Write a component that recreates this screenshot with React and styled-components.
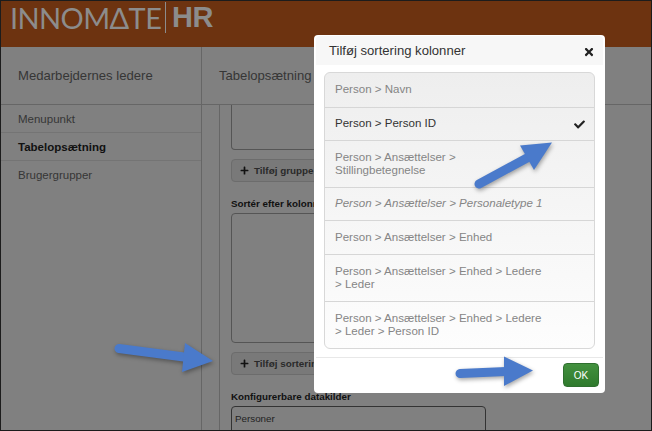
import styled, { createGlobalStyle } from 'styled-components';
import { FaCheck, FaPlus, FaTimes } from 'react-icons/fa';

const GlobalStyle = createGlobalStyle`
  html, body { margin: 0; padding: 0; background: #808080; }
  * { box-sizing: border-box; }
  body { font-family: "Liberation Sans", Arial, sans-serif; }
`;

// the page sits dimmed behind the dialog, so these are the dimmed values
const colors = {
  brand: '#6d3310',
  page: '#808080',
  logo: '#8c8c8c',
  text: '#363636',
  strong: '#111111',
  rule: '#666666',
  softRule: '#747474',
  muted: '#858585',
};

const Page = styled.div`
  position: relative;
  width: 652px;
  height: 431px;
  overflow: hidden;
  display: flex;
  flex-direction: column;
  background: ${colors.page};
  color: ${colors.text};
  outline: 1px solid #1c1c1c;
  outline-offset: -1px;
`;

const Header = styled.header`
  flex: none;
  height: 47px;
  background: ${colors.brand};
  display: flex;
  align-items: flex-start;
  padding: 2px 0 0 10px;
  color: ${colors.logo};
`;

const LogoName = styled.span`
  font-family: "Lato", sans-serif;
  font-weight: 400;
  font-size: 29px;
  line-height: 31px;
  letter-spacing: -0.6px;
  width: 155px;
  white-space: nowrap;
`;

const LogoBar = styled.span`
  width: 1px;
  height: 31px;
  background: ${colors.logo};
  margin-right: 6px;
`;

const LogoProduct = styled.span`
  font-weight: 700;
  font-size: 29px;
  line-height: 31px;
  letter-spacing: -0.5px;
`;

const Body = styled.div`
  flex: 1;
  min-height: 0;
  display: grid;
  grid-template-columns: 202px 1fr;
`;

const Sidebar = styled.aside`
  border-right: 1px solid ${colors.rule};
  display: flex;
  flex-direction: column;
`;

const Main = styled.main`
  min-width: 0;
  display: flex;
  flex-direction: column;
`;

const PanelTitle = styled.div`
  flex: none;
  height: 58px;
  border-bottom: 1px solid ${colors.rule};
  display: flex;
  align-items: center;
  font-size: 13.1px;
  color: ${colors.text};
  padding-left: ${(p) => p.$inset}px;
  white-space: nowrap;
`;

const MenuItem = styled.div`
  height: 28px;
  border-bottom: 1px solid ${(p) => (p.$last ? 'transparent' : colors.softRule)};
  display: flex;
  align-items: center;
  padding-left: 18px;
  font-size: 11.5px;
  font-weight: ${(p) => (p.$active ? 700 : 400)};
  color: ${(p) => (p.$active ? colors.strong : colors.text)};
`;

const ScrollArea = styled.div`
  flex: 1;
  min-height: 0;
  margin-left: 17px;
  border-left: 1px solid ${colors.rule};
  padding-left: 11px;
  overflow: hidden;
  display: flex;
  flex-direction: column;
  align-items: flex-start;
`;

const TextBox = styled.div`
  flex: none;
  width: 255px;
  height: ${(p) => p.$height}px;
  border: 1px solid #555555;
  border-top-width: ${(p) => (p.$cut ? 0 : 1)}px;
  border-radius: ${(p) => (p.$cut ? '0 0 4px 4px' : '4px')};
`;

const AddButton = styled.button`
  flex: none;
  margin-top: 9px;
  height: 23px;
  padding: 0 12px 0 8px;
  display: flex;
  align-items: center;
  gap: 5px;
  background: #797979;
  border: 1px solid #6c6c6c;
  border-radius: 4px;
  font: 700 9.9px "Liberation Sans", Arial, sans-serif;
  color: #2a2a2a;
  white-space: nowrap;
  svg { font-size: 9px; color: #111111; }
`;

const FieldLabel = styled.div`
  flex: none;
  font-size: 9.8px;
  line-height: 13px;
  font-weight: 700;
  color: ${colors.strong};
  white-space: nowrap;
  margin: ${(p) => p.$gap}px 0 3px;
`;

const SourceBox = styled.div`
  flex: none;
  width: 255px;
  height: 40px;
  border: 1px solid #333333;
  border-radius: 4px;
`;

const SourceRow = styled.div`
  height: 24px;
  border-bottom: 1px solid #666666;
  padding-left: 3px;
  display: flex;
  align-items: center;
  font-size: 9.8px;
  color: #222222;
`;

const Modal = styled.div`
  position: absolute;
  left: 314px;
  top: 35px;
  width: 291px;
  height: 358px;
  background: #ffffff;
  border-radius: 4px;
  padding: 1px 2px;
  display: flex;
  flex-direction: column;
`;

const ModalHead = styled.div`
  flex: none;
  height: 29px;
  background: #f7f7f7;
  border-radius: 4px 4px 0 0;
  display: flex;
  align-items: center;
  justify-content: space-between;
  padding: 0 8px 0 13px;
  font-size: 13.1px;
  color: #333333;
  svg { font-size: 12px; color: #222222; margin-top: 2px; }
`;

const OptionList = styled.div`
  flex: none;
  margin: 7px 8px 0;
  height: 277px;
  border: 1px solid #d8d8d8;
  border-radius: 6px;
  overflow: hidden;
  background: linear-gradient(#eeeeee, #fdfdfd);
`;

const Option = styled.div`
  height: ${(p) => p.$height}px;
  border-top: ${(p) => (p.$first ? 'none' : '1px solid #d6d6d6')};
  padding: 0 9px 0 10px;
  display: flex;
  align-items: center;
  justify-content: space-between;
  font-size: 11.55px;
  line-height: 13.4px;
  font-style: ${(p) => (p.$italic ? 'italic' : 'normal')};
  color: ${(p) => (p.$selected ? '#333333' : colors.muted)};
  svg { flex: none; font-size: 11px; color: #222222; }
`;

const OptionLabel = styled.span`
  width: 212px;
`;

const ModalFoot = styled.div`
  flex: 1;
  margin-top: 8px;
  border-top: 1px solid #e8e8e8;
  display: flex;
  justify-content: flex-end;
  align-items: flex-start;
  padding: 5px 4px 0 0;
`;

const OkButton = styled.button`
  width: 36px;
  height: 24px;
  border: 1px solid #2f6f2f;
  border-radius: 4px;
  background: linear-gradient(#43913f, #2f7a2d);
  color: #ffffff;
  font: 10px "Liberation Sans", Arial, sans-serif;
  padding: 0;
`;

const Annotations = styled.svg`
  position: absolute;
  top: 0;
  left: 0;
  pointer-events: none;
  filter: drop-shadow(1px 2px 2px rgba(0, 0, 0, 0.35));
`;

const options = [
  { label: 'Person > Navn', height: 34, first: true },
  { label: 'Person > Person ID', height: 33, selected: true },
  { label: 'Person > Ansættelser > Stillingbetegnelse', height: 47 },
  { label: 'Person > Ansættelser > Personaletype 1', height: 33, italic: true },
  { label: 'Person > Ansættelser > Enhed', height: 34 },
  { label: 'Person > Ansættelser > Enhed > Ledere > Leder', height: 47 },
  { label: 'Person > Ansættelser > Enhed > Ledere > Leder > Person ID', height: 47 },
];

const arrows = [
  { tail: '119,348.5 184,357', head: '185,343 213,361 182,372' },
  { tail: '479,184 527,158', head: '520,145.5 552,142.5 534,170' },
  { tail: '460,373.5 506,371.5', head: '504,356.5 533,370.5 504,386' },
];

export default function App() {
  return (
    <Page>
      <GlobalStyle />
      <Header>
        <LogoName>INNOMΔTE</LogoName>
        <LogoBar />
        <LogoProduct>HR</LogoProduct>
      </Header>

      <Body>
        <Sidebar>
          <PanelTitle $inset={18}>Medarbejdernes ledere</PanelTitle>
          <MenuItem>Menupunkt</MenuItem>
          <MenuItem $active>Tabelopsætning</MenuItem>
          <MenuItem $last>Brugergrupper</MenuItem>
        </Sidebar>

        <Main>
          <PanelTitle $inset={17}>Tabelopsætning</PanelTitle>
          <ScrollArea>
            <TextBox $cut $height={45} />
            <AddButton type="button"><FaPlus />Tilføj gruppe kolonner</AddButton>
            <FieldLabel $gap={15}>Sortér efter kolonner</FieldLabel>
            <TextBox $height={130} />
            <AddButton type="button"><FaPlus />Tilføj sortering kolonner</AddButton>
            <FieldLabel $gap={15}>Konfigurerbare datakilder</FieldLabel>
            <SourceBox>
              <SourceRow>Personer</SourceRow>
            </SourceBox>
          </ScrollArea>
        </Main>
      </Body>

      <Modal>
        <ModalHead>
          Tilføj sortering kolonner
          <FaTimes />
        </ModalHead>
        <OptionList>
          {options.map((o) => (
            <Option
              key={o.label}
              $height={o.height}
              $first={o.first}
              $selected={o.selected}
              $italic={o.italic}
            >
              <OptionLabel>{o.label}</OptionLabel>
              {o.selected ? <FaCheck /> : null}
            </Option>
          ))}
        </OptionList>
        <ModalFoot>
          <OkButton type="button">OK</OkButton>
        </ModalFoot>
      </Modal>

      <Annotations width="652" height="431" viewBox="0 0 652 431">
        {arrows.map((a) => (
          <g key={a.head} fill="#4a7acb" stroke="#4a7acb">
            <polyline points={a.tail} fill="none" strokeWidth="9" strokeLinecap="round" />
            <polygon points={a.head} strokeWidth="0" />
          </g>
        ))}
      </Annotations>
    </Page>
  );
}
